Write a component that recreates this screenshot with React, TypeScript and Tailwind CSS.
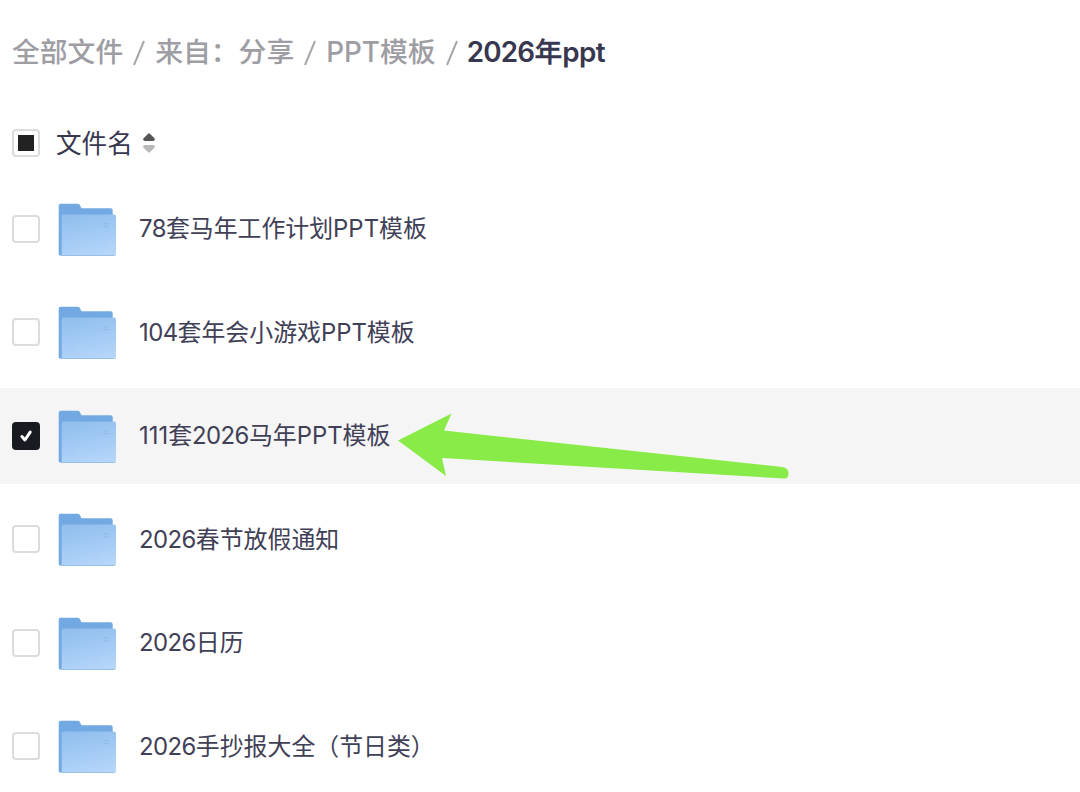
import { useState } from 'react';
import clsx from 'clsx';

interface FileItem {
  id: number;
  name: string;
}

const files: FileItem[] = [
  { id: 1, name: '78套马年工作计划PPT模板' },
  { id: 2, name: '104套年会小游戏PPT模板' },
  { id: 3, name: '111套2026马年PPT模板' },
  { id: 4, name: '2026春节放假通知' },
  { id: 5, name: '2026日历' },
  { id: 6, name: '2026手抄报大全（节日类）' },
];

const parents = ['全部文件', '来自：分享', 'PPT模板'];

// Digits run a little wide next to the Chinese text, so they get tighter tracking
function FileName({ name, className }: { name: string; className?: string }) {
  const parts = name.split(/([0-9]+)/).filter(Boolean);
  return (
    <span className={clsx('whitespace-nowrap text-[23.9px] leading-8 text-[#404057]', className)}>
      {parts.map((part, i) =>
        /^[0-9]/.test(part) ? (
          <span key={i} className={part === '111' ? 'tracking-[0px]' : 'tracking-[-0.55px]'}>{part}</span>
        ) : (
          <span key={i}>{part}</span>
        )
      )}
    </span>
  );
}

function Checkbox({ checked, onClick }: { checked: boolean; onClick: () => void }) {
  return (
    <button
      onClick={onClick}
      className={clsx(
        'flex size-7 shrink-0 items-center justify-center rounded-[4px]',
        checked ? 'bg-[#191b22]' : 'border-2 border-[#dcdcdc] bg-white'
      )}
    >
      {checked && (
        <svg className="size-7" viewBox="0 0 28 28" fill="none">
          <path d="M9.9 14.6L12.9 18L18.2 10.1" stroke="#fff" strokeWidth="3" strokeLinecap="round" strokeLinejoin="round" />
        </svg>
      )}
    </button>
  );
}

function FolderIcon() {
  return (
    <svg className="h-14 w-[60px] shrink-0" viewBox="0 0 60 56">
      <defs>
        <linearGradient id="folderFront" x1="0.3" y1="0" x2="0.6" y2="1">
          <stop offset="0" stopColor="#92bfee" />
          <stop offset="0.55" stopColor="#a3cbf5" />
          <stop offset="1" stopColor="#b5d5f9" />
        </linearGradient>
      </defs>
      <path d="M0.7 4.7Q0.7 2.7 2.7 2.7H19.5Q21 2.7 21.8 4L23.5 7.3H52.7Q54.7 7.3 54.7 9.3V54.5H2.2Q0.7 54.5 0.7 53Z" fill="#73a9e3" />
      <path d="M3.7 15.5Q3.7 13.5 5.7 13.5H56Q58 13.5 58 15.5V53Q58 55 56 55H2.2L3.7 53.5Z" fill="url(#folderFront)" />
      <path d="M3 54.5H56.5" stroke="#9abfe6" strokeWidth="1" />
      <path d="M45.5 22.7H51M45.5 25.7H51" stroke="#86b4e6" strokeWidth="0.7" />
    </svg>
  );
}

export default function App() {
  const [selected, setSelected] = useState<number[]>([3]);

  const toggle = (id: number) => {
    setSelected((prev) => (prev.includes(id) ? prev.filter((x) => x !== id) : [...prev, id]));
  };

  return (
    <main className="h-[792px] w-[1080px] overflow-hidden bg-white font-['Inter','Noto_Sans_CJK_SC',sans-serif]">
      {/* Breadcrumb */}
      <nav className="flex h-[104px] items-center whitespace-nowrap pl-3 pt-[2px] text-[27.8px] font-medium text-[#9d9da3]">
        {parents.map((item) => (
          <div key={item} className="flex items-center">
            <span>{item}</span>
            <svg className="mx-[9px] h-7 w-[14px]" viewBox="0 0 14 28" fill="none">
              <path d="M2 26L12 2" stroke="#a6a6ab" strokeWidth="2" />
            </svg>
          </div>
        ))}
        <span className="-ml-px text-[#37374f]">
          <span className="font-semibold tracking-[-0.75px]">2026</span>
          <span className="[-webkit-text-stroke:0.4px_#37374f]">年</span>
          <span className="font-semibold tracking-[-0.6px]">ppt</span>
        </span>
      </nav>

      {/* Table header */}
      <div className="flex h-[77px] items-center pl-3">
        <div className="flex size-7 items-center justify-center rounded-[4px] border-2 border-[#dcdcdc]">
          <div className="size-4 bg-[#222]" />
        </div>
        <span className="ml-4 pt-[2px] text-[25.6px] leading-8 text-[#37374f]">文件名</span>
        <svg className="ml-[10px] h-5 w-3" viewBox="0 0 12 20">
          <path d="M6 0L11.5 5.2Q12.5 8 10 8H2Q-0.5 8 0.5 5.2Z" fill="#555" />
          <path d="M6 20L11.5 14.8Q12.5 12 10 12H2Q-0.5 12 0.5 14.8Z" fill="#b9b9b9" />
        </svg>
      </div>

      {/* File list */}
      <div className="flex flex-col gap-[7px]">
        {files.map((file, index) => {
          const checked = selected.includes(file.id);
          return (
            <div
              key={file.id}
              className={clsx(
                'relative flex h-24 items-center pl-3',
                index > 0 && index % 2 === 0 && 'mt-px',
                checked && 'bg-[#f5f5f5]'
              )}
            >
              <Checkbox checked={checked} onClick={() => toggle(file.id)} />
              <div className="ml-[18px] mr-[21px]">
                <FolderIcon />
              </div>
              <FileName name={file.name} className={index % 2 === 1 ? 'pt-px' : undefined} />
              {file.id === 3 && (
                <svg className="absolute left-[390px] top-3 h-[90px] w-[410px]" viewBox="0 0 410 90">
                  <path d="M8 40.5L61.5 13.5L54 30.5L392 67Q398.5 68 398.5 73Q398.5 79 394 78.5L52 58L56 76Z" fill="#88eb48" />
                </svg>
              )}
            </div>
          );
        })}
      </div>
    </main>
  );
}
